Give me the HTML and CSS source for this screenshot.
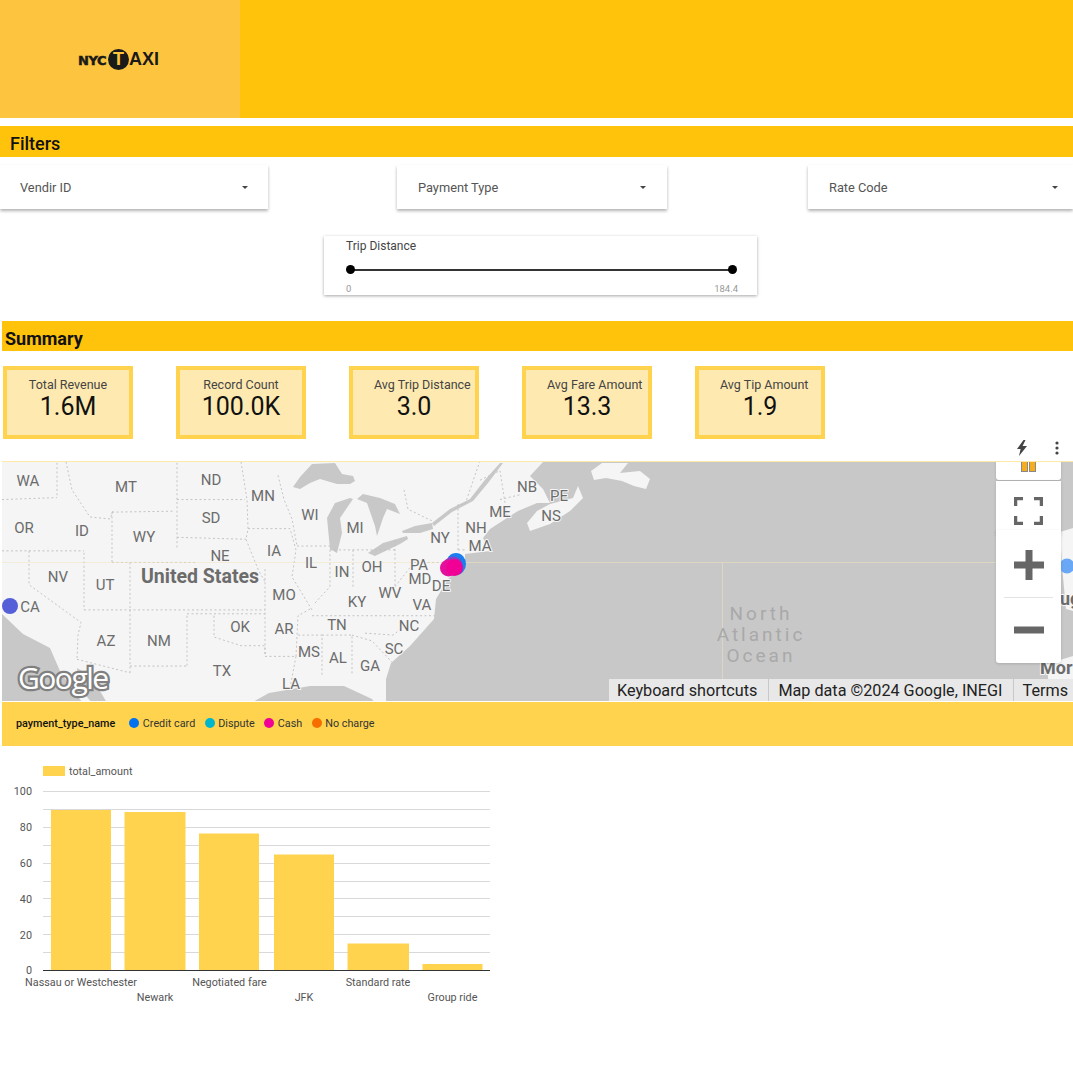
FILE: index.html
```html
<!DOCTYPE html>
<html>
<head>
  <meta charset="utf-8">
  <meta name="viewport" content="width=device-width, initial-scale=1">
  <title>NYC Taxi</title>
  <link rel="stylesheet" href="styles.css">
</head>
<body>
  <!-- Cabecera -->
  <header class="header">
    <div class="logo-box">
      <div class="logo">
        <span class="logo-nyc">NYC</span>
        <span class="logo-t">T</span>
        <span class="logo-axi">AXI</span>
      </div>
    </div>
  </header>

  <!-- Filtros -->
  <h2 class="bar bar-filters">Filters</h2>
  <div class="filters">
    <div class="select select-vendor"><span>Vendir ID</span><i class="caret"></i></div>
    <div class="select select-payment"><span>Payment Type</span><i class="caret"></i></div>
    <div class="select select-rate"><span>Rate Code</span><i class="caret"></i></div>
  </div>
  <div class="slider">
    <div class="slider-title">Trip Distance</div>
    <div class="slider-track"><i class="thumb"></i><i class="thumb"></i></div>
    <div class="slider-labels"><span>0</span><span>184.4</span></div>
  </div>

  <!-- Resumen -->
  <h2 class="bar bar-summary">Summary</h2>
  <div class="scores">
    <div class="score"><div class="score-label">Total Revenue</div><div class="score-value">1.6M</div></div>
    <div class="score"><div class="score-label">Record Count</div><div class="score-value">100.0K</div></div>
    <div class="score"><div class="score-label score-label-long">Avg Trip Distance</div><div class="score-value">3.0</div></div>
    <div class="score"><div class="score-label score-label-long">Avg Fare Amount</div><div class="score-value">13.3</div></div>
    <div class="score"><div class="score-label score-label-long">Avg Tip Amount</div><div class="score-value">1.9</div></div>
  </div>

  <div class="map-tools">
    <svg class="tool-bolt" width="12" height="16" viewBox="0 0 12 16"><path d="M7.5 0 1 9h3.6L3 16l8-10H6.6L9.5 0z" fill="#444"/></svg>
    <svg class="tool-dots" width="4" height="14" viewBox="0 0 4 14"><circle cx="2" cy="2" r="1.6" fill="#444"/><circle cx="2" cy="7" r="1.6" fill="#444"/><circle cx="2" cy="12" r="1.6" fill="#444"/></svg>
  </div>

  <!-- Mapa -->
  <div class="map">
    <svg class="map-svg" width="1071" height="240" viewBox="2 461 1071 240">
      <rect x="2" y="461" width="1071" height="240" fill="#c8c8c8"/>
      <!-- tierra -->
      <path class="land" d="M2 461H543L530 475 543 488 550 502 537 502 518 510 507 517 490 528 483 537 490 550 465 553 465 562 448 578 436 598 434 618 410 645 391 662 386 678 386 702H375L372 698 344 685 310 685 269 692 251 702H83L73 690 60 670 50 647 23 633 2 613Z"/>
      <path class="land" d="M527 522 537 510 550 503 573 497 578 485 583 497 570 510 550 523 530 530Z"/>
      <path class="land" d="M591 470 602 462H628L620 472 640 470 650 478 646 488 634 485 622 480 606 477 594 479Z"/>
      <path class="land" d="M1073 527 1060 531 1062 565 1066 608 1073 610Z"/>
      <path class="land" d="M1073 655 1047 663 1050 702H1073Z"/>
      <!-- lagos -->
      <path class="lake" d="M293 486 300 476 312 463 335 462 342 473 353 475 355 480 350 483 337 483 320 478 310 482 300 488Z"/>
      <path class="lake" d="M350 497 335 502 327 517 330 548 337 552 342 532 340 517 353 498Z"/>
      <path class="lake" d="M357 498 367 502 375 525 377 535 383 517 387 508 400 513 395 503 380 497 363 493Z"/>
      <path class="lake" d="M368 552 383 542 407 535 408 538 400 543 375 555Z"/>
      <path class="lake" d="M402 530 415 525 432 522 433 528 420 532 403 532Z"/>
      <path class="lake" d="M432 522 450 508 470 498 484 480 500 462H503L488 482 473 500 452 511 434 525Z"/>
      <path class="lake" d="M77 667 90 675 100 690 107 702H92L78 685Z"/>
      <!-- fronteras -->
      <g transform="matrix(1 0 0 .968 0 14.56)">
        <path class="border" d="M57 462V498M2 500 57 498M66 461 72 490 90 518 110 520 113 512M112 513 175 512M112 513V565M112 565H196M177 462V551M177 500H245M177 539 246 541M241 461 247 500 248 530 246 541 258 572 265 585"/>
        <path class="border" d="M2 553 84 553M84 555V614M29 553V588L81 627 78 640 77 665M130 565V614M84 614H265M130 614V679M187 620V672M130 672H187M77 665 130 679"/>
        <path class="border" d="M187 618H265M214 620V642L241 651H265V662M265 572V662M265 662H296M296 662 298 620 312 612M298 640H322V682M296 662 290 695M322 640H352V682M352 640 372 646 392 668"/>
        <path class="border" d="M248 530H290L296 552 292 580 312 614M297 548H330M330 552V590L314 608M353 552V590M330 552 H 395 M395 542V590M395 590 414 565H465M458 505V552M458 552H465M312 620H436M365 638 393 640 408 628"/>
        <path class="border" d="M278 475 284 500 292 520 297 548M404 490 408 510 432 522M480 460 465 505 458 505M480 480 500 470 507 517M500 500 520 495"/>
      </g>
      <path class="sheet-line" d="M2 561.500H996M722.500 562V680"/>
      <!-- etiquetas -->
      <g class="state">
        <text x="28" y="480">WA</text><text x="126" y="486">MT</text><text x="211" y="479">ND</text>
        <text x="263" y="495">MN</text><text x="310" y="514">WI</text><text x="355" y="527">MI</text>
        <text x="527" y="486">NB</text><text x="559" y="495">PE</text><text x="551" y="515">NS</text>
        <text x="500" y="511">ME</text><text x="476" y="527">NH</text><text x="480" y="545">MA</text>
        <text x="440" y="537">NY</text><text x="24" y="527">OR</text><text x="82" y="530">ID</text>
        <text x="144" y="536">WY</text><text x="211" y="517">SD</text><text x="220" y="555">NE</text>
        <text x="274" y="550">IA</text><text x="311" y="562">IL</text><text x="342" y="571">IN</text>
        <text x="372" y="566">OH</text><text x="419" y="564">PA</text><text x="420" y="578">MD</text>
        <text x="441" y="585">DE</text><text x="58" y="576">NV</text><text x="105" y="584">UT</text>
        <text x="284" y="594">MO</text><text x="357" y="601">KY</text><text x="390" y="592">WV</text>
        <text x="422" y="604">VA</text><text x="30" y="606">CA</text><text x="106" y="640">AZ</text>
        <text x="159" y="640">NM</text><text x="240" y="626">OK</text><text x="284" y="628">AR</text>
        <text x="337" y="624">TN</text><text x="409" y="625">NC</text><text x="394" y="648">SC</text>
        <text x="309" y="651">MS</text><text x="338" y="657">AL</text><text x="370" y="665">GA</text>
        <text x="222" y="670">TX</text><text x="291" y="683">LA</text>
      </g>
      <text class="country" x="200" y="575">United States</text>
      <g class="ocean">
        <text x="761" y="612">North</text><text x="761" y="633">Atlantic</text><text x="761" y="654">Ocean</text>
      </g>
      <text class="country country-edge" x="1040" y="666">Mor</text>
      <text class="country country-edge" x="1048" y="597">Aug</text>
      <!-- puntos -->
      <circle cx="10" cy="605" r="8" fill="#5560d8"/>
      <circle cx="1067" cy="565" r="7.5" fill="#6aa8f5"/>
      <ellipse cx="456" cy="563" rx="10" ry="11" fill="#1a7ef0"/>
      <circle cx="453" cy="565" r="9.500" fill="#8a3fc4"/>
      <circle cx="448.500" cy="567" r="8.500" fill="#e4109c"/>
      <circle cx="454.500" cy="566.500" r="8.500" fill="#f10096"/>
      <!-- logo -->
      <text class="google" x="18" y="688">Google</text>
    </svg>

    <!-- Controles encima del mapa -->
    <div class="map-control map-pegman"><i></i><i></i></div>
    <div class="map-control map-fullscreen">
      <svg width="29" height="28" viewBox="0 0 29 28"><path d="M1.500 9V1.500H9M20 1.500H27.500V9M27.500 19V26.500H20M9 26.500H1.500V19" fill="none" stroke="#666" stroke-width="3.500"/></svg>
    </div>
    <div class="map-control map-zoom">
      <div class="zoom-btn"><svg width="30" height="30" viewBox="0 0 30 30"><path d="M0 15H30M15 0V30" stroke="#666" stroke-width="7"/></svg></div>
      <div class="zoom-line"></div>
      <div class="zoom-btn"><svg width="30" height="30" viewBox="0 0 30 30"><path d="M0 15H30" stroke="#666" stroke-width="7"/></svg></div>
    </div>
    <div class="attribution">
      <span>Keyboard shortcuts</span>
      <span>Map data ©2024 Google, INEGI</span>
      <span>Terms</span>
    </div>
  </div>

  <!-- Leyenda -->
  <div class="legend">
    <b>payment_type_name</b>
    <span class="legend-item"><i class="dot dot-card"></i>Credit card</span>
    <span class="legend-item"><i class="dot dot-dispute"></i>Dispute</span>
    <span class="legend-item"><i class="dot dot-cash"></i>Cash</span>
    <span class="legend-item"><i class="dot dot-none"></i>No charge</span>
  </div>

  <!-- Grafico de barras -->
  <svg class="chart" width="510" height="264" viewBox="0 746 510 264">
    <rect class="bar-fill" x="43" y="766" width="22" height="10"/>
    <text class="chart-text" x="69" y="775">total_amount</text>
    <g class="grid">
      <path d="M43 791.500H490M43 809.500H490M43 827.500H490M43 845.500H490M43 863.500H490M43 881.500H490M43 898.500H490M43 916.500H490M43 934.500H490M43 952.500H490"/>
    </g>
    <rect class="bar-fill" x="51" y="810" width="60" height="160"/>
    <rect class="bar-fill" x="124.500" y="812" width="61" height="158"/>
    <rect class="bar-fill" x="199" y="833.500" width="60" height="136.500"/>
    <rect class="bar-fill" x="274" y="854.500" width="60" height="115.500"/>
    <rect class="bar-fill" x="347.500" y="943.500" width="61.500" height="26.500"/>
    <rect class="bar-fill" x="422.500" y="964" width="60" height="6"/>
    <path class="axis" d="M43 970.500H490"/>
    <g class="chart-text chart-y">
      <text x="32" y="795">100</text><text x="32" y="831">80</text><text x="32" y="867">60</text>
      <text x="32" y="903">40</text><text x="32" y="939">20</text><text x="32" y="974">0</text>
    </g>
    <g class="chart-text chart-x">
      <text x="81" y="986">Nassau or Westchester</text><text x="155" y="1001">Newark</text>
      <text x="229.500" y="986">Negotiated fare</text><text x="304" y="1001">JFK</text>
      <text x="378" y="986">Standard rate</text><text x="452.500" y="1001">Group ride</text>
    </g>
  </svg>
</body>
</html>
```

FILE: styles.css
```css
* {
  box-sizing: border-box;
}

body {
  font-family: Roboto, "Liberation Sans", sans-serif;
  color: #333;
  margin: 0;
  padding: 0;
  background: #fff;
}

/* Cabecera */
.header {
  height: 118px;
  background-color: #ffc30b;
}

.logo-box {
  width: 240px;
  height: 118px;
  background-color: #fdc53f;
  display: flex;
  align-items: center;
  justify-content: center;
}

.logo {
  display: flex;
  align-items: center;
  color: #1a1a1a;
  margin: 1px 3px 0 0;
}

.logo-nyc {
  font-family: "DejaVu Sans", sans-serif;
  font-weight: 700;
  font-size: 13px;
  letter-spacing: -0.500px;
  -webkit-text-stroke: 0.500px #1a1a1a;
  margin-top: 2px;
}

.logo-t {
  width: 21px;
  height: 21px;
  border-radius: 50%;
  background: #1a1a1a;
  color: #fdc53f;
  font-family: "Liberation Sans", sans-serif;
  font-weight: 700;
  font-size: 18px;
  line-height: 21px;
  text-align: center;
  margin: 0 0 0 2px;
}

.logo-axi {
  font-family: "Liberation Sans", sans-serif;
  font-weight: 700;
  font-size: 18px;
}

/* Barras de seccion */
.bar {
  margin: 0;
  background-color: #ffc30b;
  color: #111;
  font-size: 18px;
  font-weight: 700;
}

.bar-filters {
  margin-top: 8px;
  height: 31px;
  line-height: 35px;
  padding-left: 10px;
  font-weight: 500;
}

.bar-summary {
  margin-top: 26px;
  margin-left: 2px;
  height: 30px;
  line-height: 36px;
  padding-left: 3px;
}

/* Filtros */
.filters {
  display: flex;
  margin-top: 8px;
}

.select {
  height: 44px;
  background: #fff;
  box-shadow: 0 2px 3px rgba(0, 0, 0, 0.3);
  display: flex;
  align-items: center;
  justify-content: space-between;
  font-size: 12.800px;
  color: #555;
}

.select-vendor {
  width: 268px;
  padding: 0 20px;
}

.select-payment {
  width: 270px;
  margin-left: 129px;
  padding: 0 21px;
}

.select-rate {
  width: 265px;
  margin-left: 141px;
  padding: 0 15px 0 21px;
}

.caret {
  width: 0;
  height: 0;
  border-left: 3px solid transparent;
  border-right: 3px solid transparent;
  border-top: 3px solid #444;
}

/* Slider */
.slider {
  width: 433px;
  height: 59px;
  margin: 27px 0 0 324px;
  padding: 3px 19px 0 22px;
  background: #fff;
  box-shadow: 0 1px 3px rgba(0, 0, 0, 0.35);
}

.slider-title {
  font-size: 12px;
  line-height: 14px;
  color: #444;
}

.slider-track {
  height: 2px;
  margin: 15.500px 6px 0 4px;
  background: #333;
  display: flex;
  justify-content: space-between;
  align-items: center;
}

.thumb {
  width: 9px;
  height: 9px;
  border-radius: 50%;
  background: #000;
  margin: 0 -4.500px;
}

.slider-labels {
  display: flex;
  justify-content: space-between;
  margin-top: 12.500px;
  font-size: 9.500px;
  line-height: 12px;
  color: #999;
}

/* Tarjetas */
.scores {
  display: flex;
  gap: 43px;
  margin-top: 15px;
  padding-left: 3px;
}

.score {
  width: 130px;
  height: 73px;
  border: 4px solid #ffd34e;
  background: #feeab0;
  text-align: center;
  padding-top: 7px;
}

.score-label {
  font-size: 12.500px;
  line-height: 15px;
  color: #444;
  white-space: nowrap;
}

.score-label-long {
  text-align: left;
  padding-left: 21px;
}

.score-value {
  font-size: 25px;
  line-height: 29px;
  color: #111;
}

.map-tools {
  height: 22px;
  display: flex;
  justify-content: flex-end;
  align-items: center;
  padding: 0 14px 4px 0;
  gap: 27px;
}

/* Mapa */
.map {
  position: relative;
  height: 240px;
  margin-left: 2px;
  overflow: hidden;
  border-top: 1px solid #ffe9a8;
}

.map-svg {
  display: block;
}

.land {
  fill: #f5f5f5;
}

.lake {
  fill: #c8c8c8;
}

.border {
  fill: none;
  stroke: #c2c2c2;
  stroke-width: 1;
  stroke-dasharray: 2 2.500;
}

.sheet-line {
  fill: none;
  stroke: #efe3bd;
  stroke-width: 1;
  opacity: 0.5;
}

.state text {
  font-size: 15px;
  fill: #6c6c6c;
  text-anchor: middle;
  dominant-baseline: central;
  stroke: #f5f5f5;
  stroke-width: 2px;
  paint-order: stroke;
}

.country {
  font-size: 19.500px;
  font-weight: 700;
  fill: #6c6c6c;
  text-anchor: middle;
  dominant-baseline: central;
  stroke: #f5f5f5;
  stroke-width: 2px;
  paint-order: stroke;
}

.country-edge {
  text-anchor: start;
  font-size: 18px;
}

.ocean text {
  font-size: 19px;
  fill: #a9a9a9;
  letter-spacing: 3px;
  text-anchor: middle;
  dominant-baseline: central;
}

.google {
  font-family: "Open Sans", sans-serif;
  font-size: 30px;
  font-weight: 400;
  letter-spacing: -1.500px;
  fill: #fff;
  stroke: #808080;
  stroke-width: 4.500px;
  paint-order: stroke;
}

.map-control {
  position: absolute;
  left: 994px;
  width: 65px;
  background: #fff;
  box-shadow: 0 1px 3px rgba(0, 0, 0, 0.15);
}

.map-pegman {
  top: -4px;
  height: 22px;
  border-radius: 0 0 3px 3px;
  display: flex;
  justify-content: center;
  gap: 1px;
}

.map-pegman i {
  width: 7px;
  height: 14px;
  background: #f5ac1e;
  border: 1px solid #888;
  border-top: 0;
}

.map-fullscreen {
  top: 19px;
  height: 54px;
  display: flex;
  justify-content: center;
  padding-top: 16px;
}

.map-zoom {
  top: 68px;
  height: 133px;
  border-radius: 0 0 3px 3px;
}

.zoom-btn {
  height: 67px;
  display: flex;
  justify-content: center;
  padding-top: 20px;
}

.zoom-btn + .zoom-line + .zoom-btn {
  padding-top: 17px;
}

.zoom-line {
  height: 1px;
  margin: 0 8px;
  background: #e3e3e3;
}

.attribution {
  position: absolute;
  right: 0;
  bottom: 0;
  height: 22px;
  display: flex;
  gap: 1px;
  font-size: 16.200px;
  line-height: 24px;
  color: #222;
}

.attribution span {
  background: #e8e8e8;
  padding: 0 11px 0 8px;
  white-space: nowrap;
}

.attribution span + span {
  padding: 0 10px 0 9px;
}

.attribution span:last-child {
  padding: 0 5px 0 9px;
}

/* Leyenda */
.legend {
  height: 44px;
  margin: 1px 0 0 2px;
  padding: 0 0 2px 14px;
  background: #ffd34e;
  display: flex;
  align-items: center;
  font-size: 10.800px;
  color: #333;
}

.legend b {
  font-weight: 500;
  color: #111;
  margin-right: 14px;
}

.legend-item {
  display: flex;
  align-items: center;
  gap: 3.500px;
  margin-right: 9.500px;
}

.dot {
  width: 10px;
  height: 10px;
  border-radius: 50%;
}

.dot-card {
  background: #0072f0;
}

.dot-dispute {
  background: #00b6cb;
}

.dot-cash {
  background: #f10096;
}

.dot-none {
  background: #f66d00;
}

/* Grafico */
.chart {
  display: block;
}

.bar-fill {
  fill: #ffd34e;
}

.grid path {
  fill: none;
  stroke: #d9d9d9;
  stroke-width: 1;
}

.axis {
  fill: none;
  stroke: #333;
  stroke-width: 1;
}

.chart-text {
  font-size: 10.800px;
  fill: #555;
}

.chart-y text {
  text-anchor: end;
}

.chart-x text {
  text-anchor: middle;
}
```
